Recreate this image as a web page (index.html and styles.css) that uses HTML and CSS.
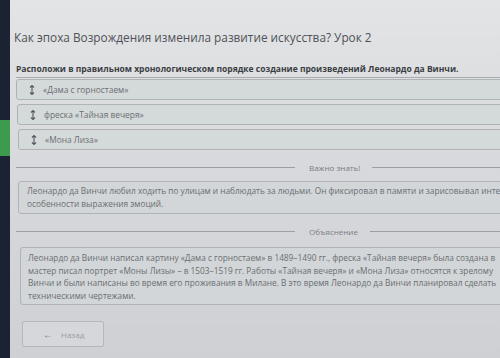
FILE: index.html
```html
<!DOCTYPE html>
<html>
<head>
  <title>Как эпоха Возрождения изменила развитие искусства? Урок 2</title>
  <link rel="stylesheet" href="styles.css">
</head>
<body>
  <div class="strip">
    <div class="strip-top"></div>
    <div class="strip-green"></div>
    <div class="strip-rest"></div>
  </div>

  <div class="main">
    <h1 class="title">Как эпоха Возрождения изменила развитие искусства? Урок 2</h1>

    <div class="task">Расположи в правильном хронологическом порядке создание произведений Леонардо да Винчи.</div>

    <div class="items">
      <div class="item">
        <svg class="grip" width="6" height="10" viewBox="0 0 6 10"><path d="M3 0.5v9M1 2.5l2-2 2 2M1 7.5l2 2 2-2" fill="none" stroke="#55595d" stroke-width="1.1"/></svg>
        «Дама с горностаем»
      </div>
      <div class="item">
        <svg class="grip" width="6" height="10" viewBox="0 0 6 10"><path d="M3 0.5v9M1 2.5l2-2 2 2M1 7.5l2 2 2-2" fill="none" stroke="#55595d" stroke-width="1.1"/></svg>
        фреска «Тайная вечеря»
      </div>
      <div class="item">
        <svg class="grip" width="6" height="10" viewBox="0 0 6 10"><path d="M3 0.5v9M1 2.5l2-2 2 2M1 7.5l2 2 2-2" fill="none" stroke="#55595d" stroke-width="1.1"/></svg>
        «Мона Лиза»
      </div>
    </div>

    <div class="divider">
      <span class="line"></span>
      <span class="label">Важно знать!</span>
      <span class="line short"></span>
    </div>

    <div class="note">
      Леонардо да Винчи любил ходить по улицам и наблюдать за людьми. Он фиксировал в памяти и зарисовывал интересные лица<br>
      особенности выражения эмоций.
    </div>

    <div class="divider second">
      <span class="line"></span>
      <span class="label">Объяснение</span>
      <span class="line short"></span>
    </div>

    <div class="note explain">
      Леонардо да Винчи написал картину «Дама с горностаем» в 1489–1490 гг., фреска «Тайная вечеря» была создана в<br>
      мастер писал портрет «Моны Лизы» – в 1503–1519 гг. Работы «Тайная вечеря» и «Мона Лиза» относятся к зрелому<br>
      Винчи и были написаны во время его проживания в Милане. В это время Леонардо да Винчи планировал сделать<br>
      техническими чертежами.
    </div>

    <button class="back"><span class="arrow">←</span>Назад</button>
  </div>
</body>
</html>
```

FILE: styles.css
```css
body {
  margin: 0;
  height: 358px;
  display: flex;
  overflow: hidden;
  font-family: "Open Sans", Arial, sans-serif;
  background: #d5d6d9;
}
.strip {
  width: 10px;
  flex: none;
  display: flex;
  flex-direction: column;
  background: #1b2333;
}
.strip-top {
  height: 120px;
}
.strip-green {
  height: 36px;
  background: #3d9b4e;
}
.main {
  flex: none;
  width: 540px;
  padding: 0 0 0 6px;
  background: linear-gradient(#e3e4e6, #d8d9dc 45%, #cfd0d4);
  box-sizing: border-box;
}
.title {
  margin: 28px 0 0 -2px;
  font-size: 11.8px;
  line-height: 18px;
  font-weight: normal;
  color: #4f5256;
}
.task {
  margin-top: 17px;
  padding-bottom: 2px;
  font-size: 8.5px;
  line-height: 12px;
  font-weight: bold;
  color: #3a3d42;
  border-bottom: 1px solid #a9abae;
}
.items {
  margin-top: 1px;
  display: flex;
  flex-direction: column;
  gap: 4px;
}
.item {
  height: 19px;
  display: flex;
  align-items: center;
  border: 1px solid #aeb3b5;
  border-radius: 3px;
  background: #d4d9da;
  font-size: 8.4px;
  color: #6b6f73;
}
.item:nth-child(2) {
  margin-left: 1px;
}
.item:nth-child(3) {
  margin-left: 2px;
}
.grip {
  margin: 0 8px 0 12px;
}
.divider {
  margin-top: 12px;
  display: flex;
  align-items: center;
  gap: 12px;
  height: 11px;
}
.line {
  flex: none;
  width: 279px;
  height: 1px;
  background: #9c9ea1;
}
.line.short {
  width: 200px;
}
.label {
  flex: none;
  white-space: nowrap;
  font-size: 8px;
  color: #7a7d80;
  margin-left: 2px;
}
.note {
  margin: 8px 0 0 2px;
  padding: 3px 8px;
  border: 1px solid #afb3b5;
  border-radius: 3px;
  background: #d2d6d8;
  font-size: 8.3px;
  line-height: 12.5px;
  color: #6a6e72;
  white-space: nowrap;
}
.explain {
  margin: 10px 0 0 4px;
  padding: 4px 7px 2px;
}
.back {
  margin: 16px 0 0 6px;
  width: 82px;
  height: 26px;
  border: 1px solid #b5b7ba;
  border-radius: 2px;
  background: #d6d7da;
  font-family: "Open Sans", Arial, sans-serif;
  font-size: 8px;
  color: #9a9da0;
  display: flex;
  align-items: center;
  padding-left: 20px;
}
.arrow {
  font-size: 10px;
  color: #6f7276;
  margin-right: 8px;
}
```
